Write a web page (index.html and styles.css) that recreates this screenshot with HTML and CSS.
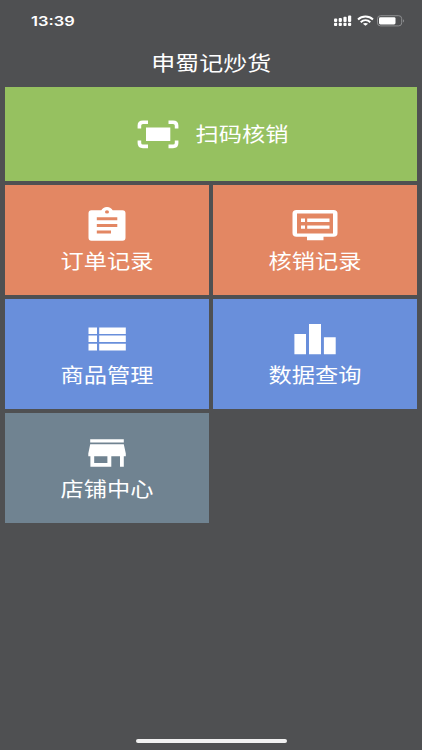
FILE: index.html
```
<!DOCTYPE html>
<html lang="zh-CN">
<head>
    <meta charset="UTF-8">
    <meta name="viewport" content="width=device-width, initial-scale=1.0">
    <title>申蜀记炒货</title>
    <link rel="stylesheet" href="styles.css">
</head>
<body>
    <div class="status-bar">
        <div class="time"><span>13:39</span></div>
        <div class="status-icons">
            <svg class="signal" width="18" height="12" viewBox="0 0 18 12" fill="#fff">
                <rect x="0" y="3.6" width="3.2" height="3.4" rx="1"/>
                <rect x="4.7" y="3" width="3.2" height="4" rx="1"/>
                <rect x="9.4" y="1.8" width="3.2" height="5.2" rx="1"/>
                <rect x="14" y="0.6" width="3.2" height="6.4" rx="1"/>
                <rect x="0" y="7.8" width="3.2" height="3.2" rx="1"/>
                <rect x="4.7" y="7.8" width="3.2" height="3.2" rx="1"/>
                <rect x="9.4" y="7.8" width="3.2" height="3.2" rx="1"/>
                <rect x="14" y="7.8" width="3.2" height="3.2" rx="1"/>
            </svg>
            <svg class="wifi" width="17" height="12" viewBox="0 0 17 12" fill="none" stroke="#fff" stroke-width="1.9">
                <path d="M1 4.5C5 0.5 12 0.5 16 4.5"/>
                <path d="M3.7 7.2C6.5 4.6 10.5 4.6 13.3 7.2"/>
                <path d="M8.5 10.8L5.9 8.8C7.2 7.7 9.8 7.7 11.1 8.8Z" fill="#fff" stroke="none"/>
            </svg>
            <svg class="battery" width="28" height="12" viewBox="0 0 28 12">
                <rect x="0.5" y="0.7" width="24.2" height="10.2" rx="3" fill="none" stroke="#8d8e90"/>
                <rect x="2" y="2.2" width="16.5" height="7.2" rx="1.4" fill="#fff"/>
                <path d="M26 4.2C27.4 4.7 27.4 6.9 26 7.4Z" fill="#8d8e90"/>
            </svg>
        </div>
    </div>

    <header class="header">
        <h1>申蜀记炒货</h1>
    </header>

    <main class="menu">
        <a class="item scan">
            <svg width="42" height="29" viewBox="0 0 42 29">
                <path d="M2.4 8.5V5.5Q2.4 2.2 6 2.2H11M31.5 2.2H36Q39.6 2.2 39.6 5.5V8.5M39.6 20.5V23Q39.6 26.4 36 26.4H31.5M11 26.4H6Q2.4 26.4 2.4 23V20.5" fill="none" stroke="#fff" stroke-width="3.6"/>
                <rect x="9" y="7.5" width="24.3" height="13.5" fill="#fff"/>
            </svg>
            <span>扫码核销</span>
        </a>
        <a class="item orange">
            <svg width="38" height="34" viewBox="0 0 38 34" fill="#fff">
                <path fill-rule="evenodd" d="M3.5 3.3H13.3C14.3 1.4 16.3 0 19 0S23.7 1.4 24.7 3.3H34.5Q37.5 3.3 37.5 6.3V30.5Q37.5 33.7 34.5 33.7H3.5Q0.5 33.7 0.5 30.5V6.3Q0.5 3.3 3.5 3.3ZM19 3.2A2 1.7 0 1 0 19 6.6A2 1.7 0 1 0 19 3.2ZM8.8 10.2V13.2H29.3V10.2ZM8.8 16.9V19.9H29.3V16.9ZM8.8 23.4V26.4H23V23.4Z"/>
            </svg>
            <span>订单记录</span>
        </a>
        <a class="item orange">
            <svg width="46" height="34" viewBox="0 0 46 34" fill="#fff">
                <path fill-rule="evenodd" d="M4.5 3H41.5Q45.5 3 45.5 6.5V26Q45.5 29.8 41.5 29.8H31.5V33.3H15V29.8H4.5Q0.5 29.8 0.5 26V6.5Q0.5 3 4.5 3ZM5 6.5V26.5H41V6.5Z"/>
                <path d="M9 11.6H13V15H9ZM15.2 11.6H37.5V15H15.2ZM9 18.4H13V21.8H9ZM15.2 18.4H37.5V21.8H15.2Z"/>
            </svg>
            <span>核销记录</span>
        </a>
        <a class="item blue">
            <svg width="38" height="34" viewBox="0 0 38 34" fill="#fff">
                <path d="M0.5 6.4H9V13H0.5ZM11.2 6.4H37.8V13H11.2ZM0.5 14.5H9V21H0.5ZM11.2 14.5H37.8V21H11.2ZM0.5 22.8H9V29.6H0.5ZM11.2 22.8H37.8V29.6H11.2Z"/>
            </svg>
            <span>商品管理</span>
        </a>
        <a class="item blue">
            <svg width="42" height="34" viewBox="0 0 42 34" fill="#fff">
                <path d="M0.4 13H12V33.2H0.4ZM15 3H27V33.2H15ZM29.9 16.3H41.7V33.2H29.9Z"/>
            </svg>
            <span>数据查询</span>
        </a>
        <a class="item gray">
            <svg width="38" height="34" viewBox="0 0 38 34" fill="#fff">
                <path d="M2.2 4.3H35.8V7.6H2.2Z"/>
                <path fill-rule="evenodd" d="M2.2 9.2H35.8L37.8 18.5V21.2H35.8V31.8H32V21.2H23.3V31.8H2.4V21.2H0.3V18.5ZM6.2 21.2V28H19.4V21.2Z"/>
            </svg>
            <span>店铺中心</span>
        </a>
    </main>

    <div class="home-bar"></div>
</body>
</html>
```
FILE: styles.css
```
* {
    box-sizing: border-box;
}
body {
    font-family: "Noto Sans CJK SC", sans-serif;
    margin: 0;
    height: 750px;
    background-color: #4f5052;
    color: #fff;
    display: flex;
    flex-direction: column;
    overflow: hidden;
}
.status-bar {
    height: 42px;
    padding: 0 17px 0 31px;
    display: flex;
    justify-content: space-between;
    align-items: center;
}
.time {
    font-family: Inter, sans-serif;
    font-size: 13.5px;
    font-weight: 600;
}
.time span {
    display: inline-block;
    transform: scaleX(1.22);
    transform-origin: left;
}
.status-icons {
    display: flex;
    align-items: center;
}
.status-icons svg {
    display: block;
}
.wifi {
    margin-left: 5px;
}
.battery {
    margin-left: 3px;
}
.header {
    height: 45px;
    padding-bottom: 6px;
    display: flex;
    justify-content: center;
    align-items: center;
}
.header h1 {
    margin: 0;
    font-size: 20.5px;
    line-height: 30px;
    font-weight: 400;
    transform: scaleX(1.17);
}
.menu {
    margin: 0 5px;
    display: grid;
    grid-template-columns: 204px 204px;
    grid-template-rows: 94px 110px 110px 110px;
    gap: 4px;
}
.item {
    display: flex;
    flex-direction: column;
    align-items: center;
    padding-top: 22px;
}
.item svg {
    display: block;
}
.item span {
    font-size: 20px;
    line-height: 30px;
    margin-top: 5px;
    transform: scaleX(1.16);
}
.scan {
    grid-column: 1 / 3;
    flex-direction: row;
    justify-content: center;
    padding: 0 3px 0 0;
    background-color: #96c160;
}
.scan span {
    margin: 0 0 0 23px;
}
.orange {
    background-color: #e38763;
}
.blue {
    background-color: #698fdb;
}
.gray {
    background-color: #708391;
}
.home-bar {
    width: 151px;
    height: 4px;
    margin: auto auto 7px 136px;
    border-radius: 2px;
    background-color: #f1f1f1;
}
```
